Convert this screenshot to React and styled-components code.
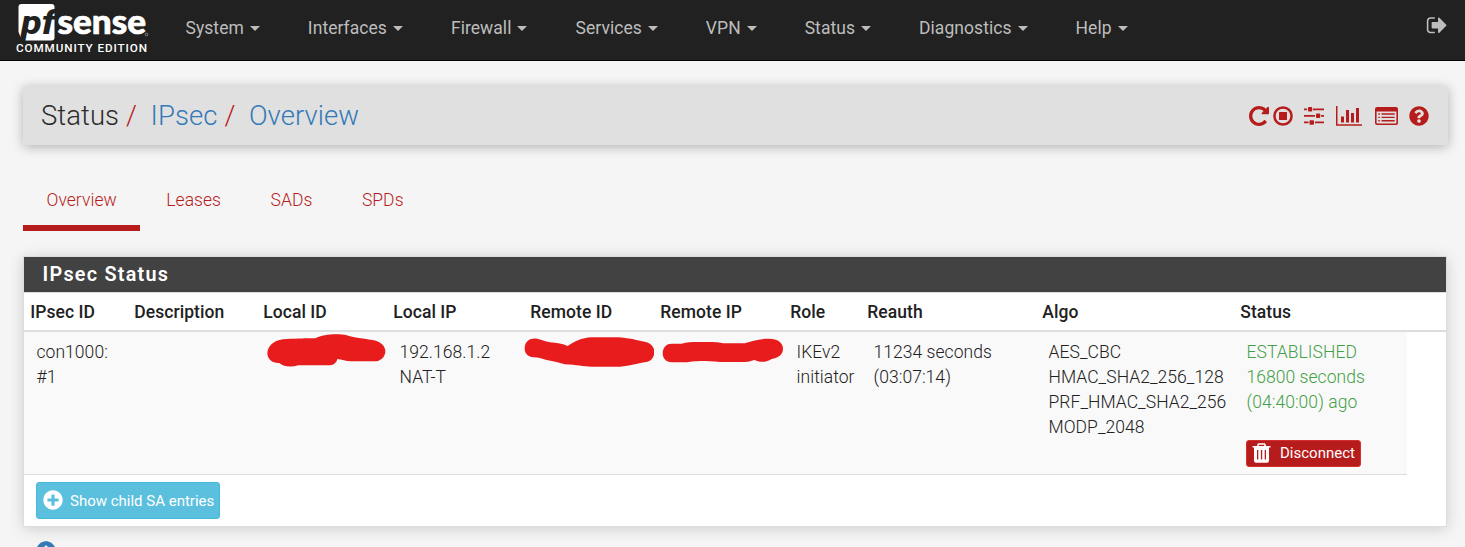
import React from "react";
import styled, { createGlobalStyle, css } from "styled-components";
import { FaQuestionCircle, FaPlusCircle, FaInfoCircle } from "react-icons/fa";

const RED = "#b71c1c";
const BLUE = "#337ab7";

const GlobalStyle = createGlobalStyle`
  * { box-sizing: border-box; }
  html, body { margin: 0; height: 100%; overflow: hidden; }
  body {
    background: #f5f5f5;
    color: #212121;
    font: 350 17.5px/25px Roboto, "Liberation Sans", sans-serif;
    letter-spacing: 0.05px;
  }
  svg { display: block; }
`;

const Screen = styled.div`
  height: 100vh;
  overflow: hidden;
`;

const NavBar = styled.nav`
  display: flex;
  height: 61px;
  padding: 0 17px 0 16px;
  background: #212121;
  border-bottom: 1px solid #080808;
`;

const Brand = styled.div`
  width: 169.5px;
  color: #fff;
`;

const Edition = styled.div`
  margin-top: -7px;
  font-weight: 500;
  font-size: 11.7px;
  line-height: 14px;
  letter-spacing: 0.9px;
  white-space: nowrap;
`;

const Menu = styled.ul`
  display: flex;
  flex: 1;
  gap: 48px;
  margin: 0;
  padding: 16px 0 0;
  list-style: none;
`;

const MenuItem = styled.li`
  display: flex;
  align-items: center;
  gap: 6px;
  height: 25px;
  color: #bdbdbd;
  font-weight: 400;
`;

const Caret = styled.span`
  border: 5px solid transparent;
  border-top-color: currentColor;
  border-bottom: 0;
`;

const SignOut = styled.div`
  padding-top: 14px;
  color: #bdbdbd;
`;

const Page = styled.main`
  padding: 25px 17px 0 23px;
`;

const TitleBar = styled.header`
  display: flex;
  align-items: center;
  justify-content: space-between;
  height: 59px;
  padding: 0 19px 0 18px;
  background: #e0e0e0;
  border-radius: 2px;
  box-shadow: 0 2px 12px rgba(0, 0, 0, 0.28);
`;

const Crumbs = styled.ol`
  display: flex;
  margin: 0;
  padding: 0;
  list-style: none;
  font-size: 27.5px;
  line-height: 36px;
`;

const Crumb = styled.li`
  color: ${(p) => (p.$link ? BLUE : "#2b2b2b")};
  &:not(:last-child)::after {
    content: "/";
    padding: 0 13.500px 0 7px;
    color: ${RED};
  }
`;

const Actions = styled.div`
  display: flex;
  align-items: center;
  color: ${RED};
`;

const Action = styled.span`
  margin-left: ${(p) => p.$gap}px;
`;

const Tabs = styled.ul`
  display: flex;
  margin: 34px 0 0;
  padding: 0;
  list-style: none;
`;

const Tab = styled.li`
  height: 52px;
  padding: 9px 23.5px 0 23.5px;
  margin-right: 2.5px;
  color: ${RED};
  border-bottom: 6px solid ${(p) => (p.$active ? RED : "transparent")};
`;

const Panel = styled.section`
  width: 1424px;
  height: 271px;
  margin-top: 25px;
  background: #fff;
  border: 1px solid #ddd;
  box-shadow: 0 2px 14px rgba(0, 0, 0, 0.16);
`;

const PanelTitle = styled.h2`
  height: 36px;
  margin: 0;
  padding-left: 18.5px;
  background: #424242;
  color: #fff;
  border-bottom: 1px solid #ddd;
  font-weight: 600;
  font-size: 19.8px;
  line-height: 36px;
  letter-spacing: 1.25px;
`;

const Table = styled.table`
  width: 100%;
  table-layout: fixed;
  border-collapse: separate;
  border-spacing: 0;
`;

const Th = styled.th`
  height: 39px;
  padding: 1px 0 0 6.25px;
  border-bottom: 2px solid #ddd;
  text-align: left;
  font-weight: 550;
  white-space: nowrap;
`;

const Td = styled.td`
  position: relative;
  height: 143px;
  padding: 8px 0 0 12.5px;
  background: #f9f9f9;
  border-bottom: 1px solid #ddd;
  vertical-align: top;
  white-space: nowrap;
  color: ${(p) => (p.$ok ? "#43a047" : "inherit")};
`;

const Scribble = styled.svg`
  position: absolute;
  left: ${(p) => p.$left}px;
  top: ${(p) => p.$top}px;
  fill: #e81c1c;
`;

const button = css`
  display: flex;
  align-items: center;
  color: #fff;
  font-family: inherit;
  font-weight: 400;
  white-space: nowrap;
  border-radius: 3px;
`;

const Disconnect = styled.button`
  ${button}
  width: 115px;
  height: 27px;
  margin: 25px 0 0 -0.5px;
  padding: 0 0 2px 5px;
  gap: 9px;
  background: ${RED};
  border: 1px solid #d32f2f;
  font-size: 15px;
`;

const ShowChildren = styled.button`
  ${button}
  width: 184px;
  height: 37px;
  margin: 7px 0 0 12px;
  padding: 0 0 0 6px;
  gap: 7px;
  background: #5bc0de;
  border: 1px solid #46b8da;
  font-size: 15px;

  svg { margin-top: -2px; }
`;

const Info = styled.div`
  margin: 14px 0 0 13px;
  color: ${BLUE};
`;

const LogoSvg = styled.svg`
  letter-spacing: 0;
`;

const Initials = styled.text`
  font-family: Roboto, sans-serif;
  font-weight: 800;
  font-style: italic;
`;

const Wordmark = styled.text`
  font-family: Lato, sans-serif;
  font-weight: 900;
`;

const Logo = () => (
  <LogoSvg width="138" height="48" viewBox="0 -4 138 48">
    <path d="M5.500 0H35.500Q38.500 0 38.500 3V33.500Q38.500 36.500 35.500 36.500H6L2.500 28V3Q2.500 0 5.500 0Z" fill="#fff" />
    <Initials x="5" y="29.800" fontSize="34" fill="#212121" textLength="34" lengthAdjust="spacingAndGlyphs">pf</Initials>
    <Wordmark x="41.500" y="29.700" fontSize="34.500" fill="#fff" stroke="#fff" strokeWidth=".7" textLength="88.500" lengthAdjust="spacingAndGlyphs">sense</Wordmark>
    <circle cx="130.500" cy="30.500" r="1.300" fill="none" stroke="#aaa" strokeWidth=".7" />
  </LogoSvg>
);

const SignOutIcon = () => (
  <svg width="22.500" height="22.500" viewBox="0 0 1792 1792" fill="currentColor">
    <path d="M704 1440q0 4 1 20t.5 26.5-3 23.5-10 19.5-20.5 6.5h-320q-119 0-203.500-84.500t-84.500-203.500v-704q0-119 84.500-203.500t203.500-84.500h320q13 0 22.500 9.500t9.500 22.500q0 4 1 20t.5 26.500-3 23.500-10 19.500-20.500 6.500h-320q-66 0-113 47t-47 113v704q0 66 47 113t113 47h312l11.500 1 11.500 3 8 5.500 7 9 2 13.500zm928-544q0 26-19 45l-544 544q-19 19-45 19t-45-19-19-45v-288h-448q-26 0-45-19t-19-45v-384q0-26 19-45t45-19h448v-288q0-26 19-45t45-19 45 19l544 544q19 19 19 45z" />
  </svg>
);

const RestartIcon = () => (
  <svg width="20" height="20" viewBox="128 128 1536 1536" fill="currentColor">
    <path d="M1664 256v448q0 26-19 45t-45 19h-448q-42 0-59-40-17-39 14-69l138-138q-148-137-349-137-104 0-198.500 40.500t-163.500 109.500-109.500 163.500-40.500 198.500 40.500 198.500 109.500 163.500 163.500 109.500 198.500 40.500q119 0 225-52t179-147q7-10 23-12 14 0 25 9l137 138q9 8 9.500 20.500t-7.500 22.500q-109 132-264 204.500t-327 72.500q-156 0-298-61t-245-164-164-245-61-298 61-298 164-245 245-164 298-61q147 0 284.500 55.500t244.500 156.500l130-129q29-31 70-14 39 17 39 59z" />
  </svg>
);

const StopIcon = () => (
  <svg width="20" height="20" viewBox="0 0 20 20">
    <circle cx="10" cy="10" r="8.600" fill="none" stroke="currentColor" strokeWidth="2.500" />
    <rect x="6" y="6" width="8" height="8" rx=".5" fill="currentColor" />
  </svg>
);

const SlidersIcon = () => (
  <svg width="20" height="18" viewBox="0 0 20 18" fill="currentColor">
    <path d="M0 1.500H3V3.200H0zM9 1.500H20V3.200H9zM0 8H11V9.700H0zM17 8H20V9.700H17zM0 14.600H4.500V16.300H0zM11 14.600H20V16.300H11z" />
    <rect x="4" y="0" width="4.200" height="4.500" rx=".8" />
    <rect x="12" y="6.500" width="4.200" height="4.500" rx=".8" />
    <rect x="5.500" y="13.200" width="4.500" height="4.500" rx=".8" />
  </svg>
);

const ChartIcon = () => (
  <svg width="26" height="20" viewBox="0 0 26 20" fill="currentColor">
    <path d="M0 0H1.500V18.200H26V19.700H0zM5 10.500H8V16.500H5zM10 4H13V16.500H10zM15 7H18V16.500H15zM20 2H23V16.500H20z" />
  </svg>
);

const ListIcon = () => (
  <svg width="23" height="18" viewBox="0 0 23 18" fill="currentColor">
    <path
      fillRule="evenodd"
      d="M2 0H21Q23 0 23 2V16Q23 18 21 18H2Q0 18 0 16V2Q0 0 2 0ZM1.600 4.600V15.600Q1.600 16.500 2.500 16.500H20.500Q21.400 16.500 21.400 15.600V4.600Z"
    />
    <path d="M3.300 6.300H4.800V7.700H3.300zM3.300 9.700H4.800V11.100H3.300zM3.300 13H4.800V14.400H3.300zM6.500 6.300H19.700V7.700H6.500zM6.500 9.700H19.700V11.100H6.500zM6.500 13H19.700V14.400H6.500z" />
  </svg>
);

const TrashIcon = () => (
  <svg width="19" height="20" viewBox="0 0 19 20">
    <path d="M5.500 3.500L6.500 1H12.500L13.500 3.500" fill="none" stroke="#fff" strokeWidth="1.600" />
    <path
      fill="#fff"
      fillRule="evenodd"
      d="M.5 3H18.500V4.500H17V17.500Q17 19.700 15 19.700H4Q2 19.700 2 17.500V4.500H.5ZM5 7V16.500H6.300V7ZM8.900 7V16.500H10.200V7ZM12.700 7V16.500H14V7Z"
    />
  </svg>
);

const menu = ["System", "Interfaces", "Firewall", "Services", "VPN", "Status", "Diagnostics", "Help"];

const columns = [
  ["IPsec ID", 104],
  ["Description", 129],
  ["Local ID", 130],
  ["Local IP", 137],
  ["Remote ID", 130],
  ["Remote IP", 130],
  ["Role", 77],
  ["Reauth", 175],
  ["Algo", 198],
  ["Status", 173],
  ["", 39],
];

export default function App() {
  return (
    <Screen>
      <GlobalStyle />
      <NavBar>
        <Brand>
          <Logo />
          <Edition>COMMUNITY EDITION</Edition>
        </Brand>
        <Menu>
          {menu.map((name) => (
            <MenuItem key={name}>
              {name}
              <Caret />
            </MenuItem>
          ))}
        </Menu>
        <SignOut><SignOutIcon /></SignOut>
      </NavBar>
      <Page>
        <TitleBar>
          <Crumbs>
            <Crumb>Status</Crumb>
            <Crumb $link>IPsec</Crumb>
            <Crumb $link>Overview</Crumb>
          </Crumbs>
          <Actions>
            <Action $gap={0}><RestartIcon /></Action>
            <Action $gap={4}><StopIcon /></Action>
            <Action $gap={11}><SlidersIcon /></Action>
            <Action $gap={12}><ChartIcon /></Action>
            <Action $gap={12.5}><ListIcon /></Action>
            <Action $gap={11.5}><FaQuestionCircle size={20} /></Action>
          </Actions>
        </TitleBar>
        <Tabs>
          <Tab $active>Overview</Tab>
          <Tab>Leases</Tab>
          <Tab>SADs</Tab>
          <Tab>SPDs</Tab>
        </Tabs>
        <Panel>
          <PanelTitle>IPsec Status</PanelTitle>
          <Table>
            <colgroup>
              {columns.map(([name, width]) => <col key={name} width={width} />)}
            </colgroup>
            <thead>
              <tr>{columns.map(([name]) => <Th key={name}>{name}</Th>)}</tr>
            </thead>
            <tbody>
              <tr>
                <Td>con1000:<br />#1</Td>
                <Td />
                <Td>
                  <Scribble $left={10} $top={1} width="119" height="34" viewBox="51 21 357 102">
                    <path d="M52 82C53 54 80 39 110 39C145 38 170 37 196 37C220 24 265 22 290 28C315 36 350 39 378 44C398 51 407 64 406 78C404 95 391 106 374 106H302C288 105 275 101 262 99C259 111 250 118 235 118H145C125 124 100 123 88 111C66 112 53 100 52 82Z" />
                  </Scribble>
                </Td>
                <Td>192.168.1.2<br />NAT-T</Td>
                <Td>
                  <Scribble $left={0} $top={4} width="131" height="31" viewBox="27 30 393 93">
                    <path d="M29 66C30 46 44 36 66 38C78 40 90 46 105 49C125 51 145 54 158 60C175 48 200 35 230 34H310C335 35 370 43 395 49C411 55 419 67 418 81C416 98 405 108 388 109C368 112 345 120 315 122H230C205 122 185 116 150 115C135 111 115 105 95 102C80 98 70 94 55 94C38 92 28 81 29 66Z" />
                  </Scribble>
                </Td>
                <Td>
                  <Scribble $left={8} $top={5} width="122" height="26" viewBox="441 36 366 78">
                    <path d="M443 84C444 66 455 56 470 56H500C515 52 530 51 550 51H595C612 52 620 55 635 55H690C710 48 735 41 762 41C788 41 804 53 804 71C804 89 790 98 770 102C755 110 742 115 718 105C705 108 700 111 690 111H615C595 108 575 108 555 108C530 109 520 112 505 112H470C453 111 443 100 443 84Z" />
                  </Scribble>
                </Td>
                <Td>IKEv2<br />initiator</Td>
                <Td>11234 seconds<br />(03:07:14)</Td>
                <Td>AES_CBC<br />HMAC_SHA2_256_128<br />PRF_HMAC_SHA2_256<br />MODP_2048</Td>
                <Td $ok>
                  ESTABLISHED<br />16800 seconds<br />(04:40:00) ago
                  <Disconnect><TrashIcon />Disconnect</Disconnect>
                </Td>
              </tr>
            </tbody>
          </Table>
          <ShowChildren><FaPlusCircle size={20} />Show child SA entries</ShowChildren>
        </Panel>
        <Info><FaInfoCircle size={20} /></Info>
      </Page>
    </Screen>
  );
}
